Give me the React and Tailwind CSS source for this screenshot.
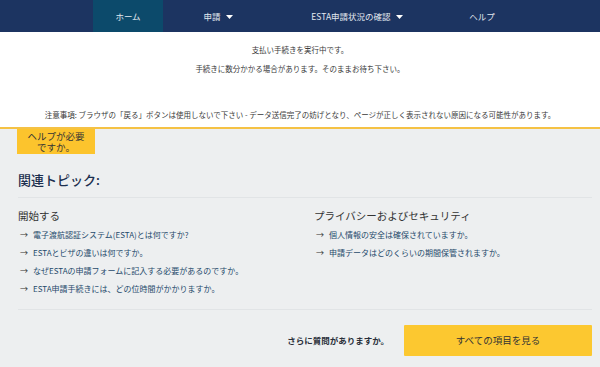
import React from "react";

const jp = { fontFamily: '"Noto Sans CJK JP", "Noto Sans", sans-serif' };

function Caret() {
  return (
    <svg width="7" height="4" viewBox="0 0 7 4" className="ml-[5px] mt-[1px]">
      <path d="M0 0 L7 0 L3.5 4 Z" fill="#ffffff" />
    </svg>
  );
}

function Item({ children }) {
  return (
    <li className="flex items-center h-[18px]">
      <span className="text-[8px] text-[#333] mr-[5px] ml-[2px]">→</span>
      <span className="text-[8px] text-[#1f4a6b]">{children}</span>
    </li>
  );
}

export default function App() {
  return (
    <div className="w-[600px] h-[367px] bg-[#edeff0] overflow-hidden" style={jp}>
      <nav className="h-[32px] bg-[#1c3461] flex text-[8.5px] text-[#e3e9f0]">
        <div className="w-[93px]" />
        <div className="w-[70px] bg-[#0c4a6b] flex items-center justify-center">ホーム</div>
        <div className="w-[110px] flex items-center justify-center">申請<Caret /></div>
        <div className="w-[168px] flex items-center justify-center">ESTA申請状況の確認<Caret /></div>
        <div className="w-[82px] flex items-center justify-center">ヘルプ</div>
      </nav>
      <section className="bg-white h-[97px] border-b-[2px] border-[#f5c245] text-[7.5px] text-[#3a3a3a] text-center">
        <p className="pt-[13px] leading-[10px]">支払い手続きを実行中です。</p>
        <p className="pt-[9px] leading-[10px]">手続きに数分かかる場合があります。そのままお待ち下さい。</p>
        <p className="pt-[36px] leading-[10px]">注意事項: ブラウザの「戻る」ボタンは使用しないで下さい - データ送信完了の妨げとなり、ページが正しく表示されない原因になる可能性があります。</p>
      </section>
      <div className="px-[18px]">
        <div className="w-[78px] h-[25px] bg-[#fcc42d] text-[#333] text-[9.5px] leading-[11px] text-center flex items-center justify-center ml-[-1px]">
          <p>ヘルプが必要<br />ですか。</p>
        </div>
        <h2 className="mt-[17px] text-[13px] font-medium text-[#1c2f4f] leading-[18px]">関連トピック:</h2>
        <div className="mt-[8px] border-t border-[#e1e4e6] w-[574px]" />
        <div className="flex mt-[11px]">
          <div className="w-[296px]">
            <h3 className="text-[10.5px] text-[#333] leading-[14px] mb-[3px]">開始する</h3>
            <ul>
              <Item>電子渡航認証システム(ESTA)とは何ですか?</Item>
              <Item>ESTAとビザの違いは何ですか。</Item>
              <Item>なぜESTAの申請フォームに記入する必要があるのですか。</Item>
              <Item>ESTA申請手続きには、どの位時間がかかりますか。</Item>
            </ul>
          </div>
          <div>
            <h3 className="text-[10.5px] text-[#333] leading-[14px] mb-[3px]">プライバシーおよびセキュリティ</h3>
            <ul>
              <Item>個人情報の安全は確保されていますか。</Item>
              <Item>申請データはどのくらいの期間保管されますか。</Item>
            </ul>
          </div>
        </div>
        <div className="mt-[11px] border-t border-[#e1e4e6] w-[574px]" />
        <div className="flex items-center justify-end w-[574px] mt-[15px]">
          <span className="text-[8.5px] font-bold text-[#2a2f3a] mr-[15px]">さらに質問がありますか。</span>
          <button className="w-[188px] h-[31px] bg-[#fcc830] text-[9.5px] text-[#333] rounded-[1px]">すべての項目を見る</button>
        </div>
      </div>
    </div>
  );
}
